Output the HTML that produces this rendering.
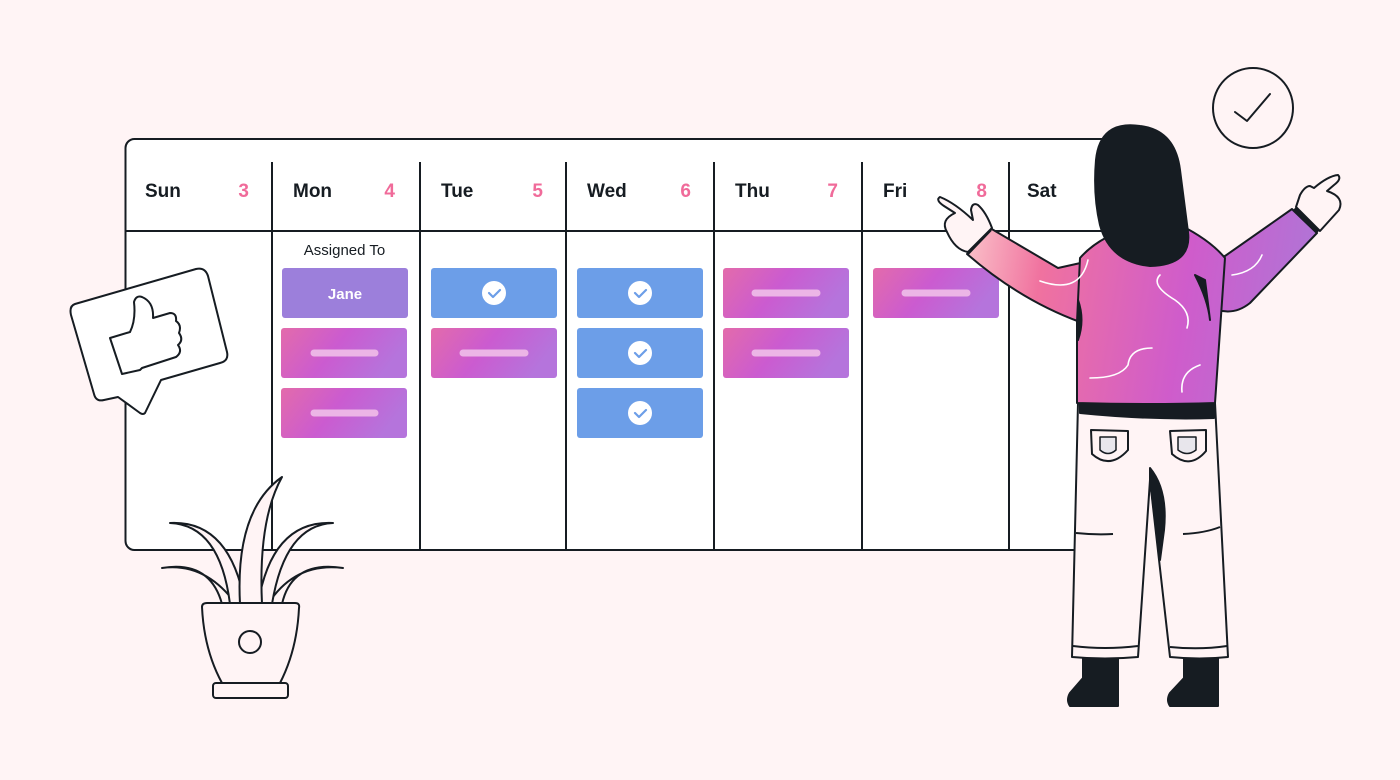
<!DOCTYPE html>
<html><head><meta charset="utf-8"><style>
html,body{margin:0;padding:0;background:#fff4f5;}
body{width:1400px;height:780px;position:relative;overflow:hidden;font-family:"Liberation Sans",sans-serif;}
</style></head><body>
<svg width="1400" height="780" viewBox="0 0 1400 780" xmlns="http://www.w3.org/2000/svg" style="position:absolute;left:0;top:0">
<defs>
<linearGradient id="pk" x1="0" y1="0" x2="1" y2="0.3">
<stop offset="0" stop-color="#e36bab"/><stop offset="0.5" stop-color="#cb5bd0"/><stop offset="1" stop-color="#b574dc"/>
</linearGradient>
<linearGradient id="sw" gradientUnits="userSpaceOnUse" x1="960" y1="240" x2="1340" y2="300">
<stop offset="0" stop-color="#fbc7cc"/><stop offset="0.22" stop-color="#f0729f"/><stop offset="0.6" stop-color="#cf5ccb"/><stop offset="1" stop-color="#a97ad9"/>
</linearGradient>
</defs>
<!-- calendar -->
<rect x="125.5" y="139" width="1000" height="411" rx="9" fill="#fff" stroke="#161c22" stroke-width="2"/>
<line x1="126" y1="231" x2="1120" y2="231" stroke="#161c22" stroke-width="2"/>
<g stroke="#161c22" stroke-width="2">
<line x1="272" y1="162" x2="272" y2="550"/><line x1="420" y1="162" x2="420" y2="550"/>
<line x1="566" y1="162" x2="566" y2="550"/><line x1="714" y1="162" x2="714" y2="550"/>
<line x1="862" y1="162" x2="862" y2="550"/><line x1="1009" y1="162" x2="1009" y2="550"/>
</g>
<g font-size="19" font-weight="bold" fill="#161c22">
<text x="145" y="197">Sun</text><text x="293" y="197">Mon</text><text x="441" y="197">Tue</text>
<text x="587" y="197">Wed</text><text x="735" y="197">Thu</text><text x="883" y="197">Fri</text><text x="1027" y="197">Sat</text>
</g>
<g font-size="19" font-weight="bold" fill="#f06b9a" text-anchor="end">
<text x="249" y="197">3</text><text x="395" y="197">4</text><text x="543" y="197">5</text>
<text x="691" y="197">6</text><text x="838" y="197">7</text><text x="987" y="197">8</text>
</g>
<text x="344.5" y="255" font-size="15" fill="#161c22" text-anchor="middle">Assigned To</text>
<rect x="282" y="268" width="126" height="50" rx="3" fill="#9c7fdb"/>
<text x="345" y="299" font-size="15" font-weight="bold" fill="#fff" text-anchor="middle">Jane</text>
<g>
<rect x="281" y="328" width="126" height="50" rx="3" fill="url(#pk)"/>
<rect x="281" y="388" width="126" height="50" rx="3" fill="url(#pk)"/>
<rect x="431" y="328" width="126" height="50" rx="3" fill="url(#pk)"/>
<rect x="723" y="268" width="126" height="50" rx="3" fill="url(#pk)"/>
<rect x="723" y="328" width="126" height="50" rx="3" fill="url(#pk)"/>
<rect x="873" y="268" width="126" height="50" rx="3" fill="url(#pk)"/>
</g>
<g stroke="#ecb5e6" stroke-width="7" stroke-linecap="round">
<line x1="314" y1="353" x2="375" y2="353"/><line x1="314" y1="413" x2="375" y2="413"/>
<line x1="463" y1="353" x2="525" y2="353"/><line x1="755" y1="293" x2="817" y2="293"/>
<line x1="755" y1="353" x2="817" y2="353"/><line x1="905" y1="293" x2="967" y2="293"/>
</g>
<g fill="#6c9ee8">
<rect x="431" y="268" width="126" height="50" rx="3"/>
<rect x="577" y="268" width="126" height="50" rx="3"/>
<rect x="577" y="328" width="126" height="50" rx="3"/>
<rect x="577" y="388" width="126" height="50" rx="3"/>
</g>
<g>
<circle cx="494" cy="293" r="12" fill="#fff"/><circle cx="640" cy="293" r="12" fill="#fff"/>
<circle cx="640" cy="353" r="12" fill="#fff"/><circle cx="640" cy="413" r="12" fill="#fff"/>
</g>
<g fill="none" stroke="#6c9ee8" stroke-width="2.2" stroke-linecap="round" stroke-linejoin="round">
<path d="M489 293l4 4 7-7"/><path d="M635 293l4 4 7-7"/><path d="M635 353l4 4 7-7"/><path d="M635 413l4 4 7-7"/>
</g>
<!-- thumbs up -->
<path d="M75 304 L196 269 Q205 267 208 276 L227 352 Q229 361 220 363 L161 380 L145 413 Q143 415 140 413 L118 397 L104 400 Q96 402 94 394 L71 315 Q69 306 75 304 Z" fill="#fff" stroke="#161c22" stroke-width="2" stroke-linejoin="round"/>
<path d="M110 338 L130 332 Q136 320 134 302 Q136 295 142 297 Q154 302 153 318 L170 313 Q177 313 176 321 Q182 325 179 333 Q184 340 178 345 Q183 352 176 357 L142 368 L140 370 L122 374 Z" fill="#fff" stroke="#161c22" stroke-width="2" stroke-linejoin="round"/>
<!-- plant leaves -->
<g fill="#fff4f5" stroke="#161c22" stroke-width="2" stroke-linejoin="round">
<path d="M222 604 Q210 560 162 568 Q205 562 236 604 Z"/>
<path d="M230 604 Q220 525 170 523 Q230 520 245 604 Z"/>
<path d="M282 604 Q292 560 343 568 Q295 562 268 604 Z"/>
<path d="M272 604 Q285 525 333 523 Q272 520 258 604 Z"/>
<path d="M240 604 Q235 510 282 477 Q258 520 262 604 Z"/>
<path d="M202 607 Q202 603 207 603 L295 603 Q300 603 299 608 Q297 650 280 683 L222 683 Q204 650 202 607 Z"/>
<rect x="213" y="683" width="75" height="15" rx="3"/>
<circle cx="250" cy="642" r="11"/>
</g>
<!-- check circle -->
<circle cx="1253" cy="108" r="40" fill="none" stroke="#161c22" stroke-width="2"/>
<path d="M1235 112 L1247 121 L1270 94" fill="none" stroke="#161c22" stroke-width="2" stroke-linecap="round" stroke-linejoin="round"/>
<!-- woman -->
<g stroke="#161c22" stroke-width="2" stroke-linejoin="round">
<path d="M1083 655 L1118 655 L1118 706 L1070 706 Q1066 700 1070 693 L1083 678 Z" fill="#161c22"/>
<path d="M1184 655 L1218 655 L1218 706 L1170 706 Q1166 700 1170 693 L1184 678 Z" fill="#161c22"/>
<path d="M1078 403 L1215 403 L1228 657 Q1200 660 1170 657 L1150 480 L1138 657 Q1105 660 1072 657 Z" fill="#fff4f5"/>
<path d="M1150 468 Q1168 490 1164 530 L1160 560 L1150 480 Z" fill="#161c22"/>
<path d="M1073 646 Q1105 650 1138 646 M1170 647 Q1200 650 1227 646" fill="none"/>
<path d="M1076 533 Q1095 535 1113 534 M1183 534 Q1205 533 1220 527" fill="none"/>
<path d="M1091 430 L1128 431 L1128 450 Q1110 470 1092 454 Z" fill="#fff4f5"/>
<path d="M1100 437 L1116 437 L1116 450 Q1108 457 1100 450 Z" fill="#e8e6ec" stroke-width="1.5"/>
<path d="M1170 431 L1206 430 L1206 451 Q1190 470 1172 454 Z" fill="#fff4f5"/>
<path d="M1178 437 L1196 437 L1196 450 Q1187 457 1178 450 Z" fill="#e8e6ec" stroke-width="1.5"/>
<path d="M1080 403 L1214 403 L1214 418 Q1150 420 1080 413 Z" fill="#161c22"/>
<!-- left arm -->
<path d="M990 228 L1058 268 L1085 262 L1088 320 L1080 322 Q1020 300 967 254 Z" fill="url(#sw)"/>
<!-- right arm -->
<path d="M1210 260 L1225 256 L1292 209 L1317 233 L1250 303 Q1235 315 1218 310 Z" fill="url(#sw)"/>
<!-- torso -->
<path d="M1080 258 Q1100 235 1140 225 L1180 225 Q1210 240 1225 258 L1215 403 Q1150 405 1077 403 L1077 322 Z" fill="url(#sw)"/>
<path d="M1078 300 Q1085 320 1078 340 Z M1195 275 Q1208 300 1210 320 L1205 280 Z" fill="#161c22"/>
<path d="M967 253 L990 229" stroke-width="5"/>
<path d="M1294 209 L1318 232" stroke-width="5"/>
<path d="M992 228 Q986 212 978 205 Q972 202 971 210 L973 220 Q955 203 940 197 Q935 200 944 206 L955 213 Q940 220 947 232 Q955 250 968 252 Z" fill="#fff4f5"/>
<path d="M1296 207 L1300 195 Q1305 186 1310 186 L1314 188 Q1328 176 1338 175 Q1342 179 1334 185 L1327 191 Q1345 197 1339 210 L1320 231 Z" fill="#fff4f5"/>
<path d="M1096 160 Q1100 120 1140 126 Q1175 130 1180 170 L1188 232 Q1192 265 1150 266 Q1110 262 1100 225 Q1093 195 1096 160 Z" fill="#161c22"/>
</g>
<g fill="none" stroke="#fff" stroke-width="1.6" stroke-linecap="round">
<path d="M1040 281 Q1080 295 1088 260"/>
<path d="M1160 275 Q1150 285 1175 300 Q1192 312 1187 328"/>
<path d="M1090 378 Q1120 378 1128 365 Q1130 348 1152 348"/>
<path d="M1182 392 Q1180 372 1200 365"/>
<path d="M1232 275 Q1255 272 1262 255"/>
</g>
</svg>
</body></html>
